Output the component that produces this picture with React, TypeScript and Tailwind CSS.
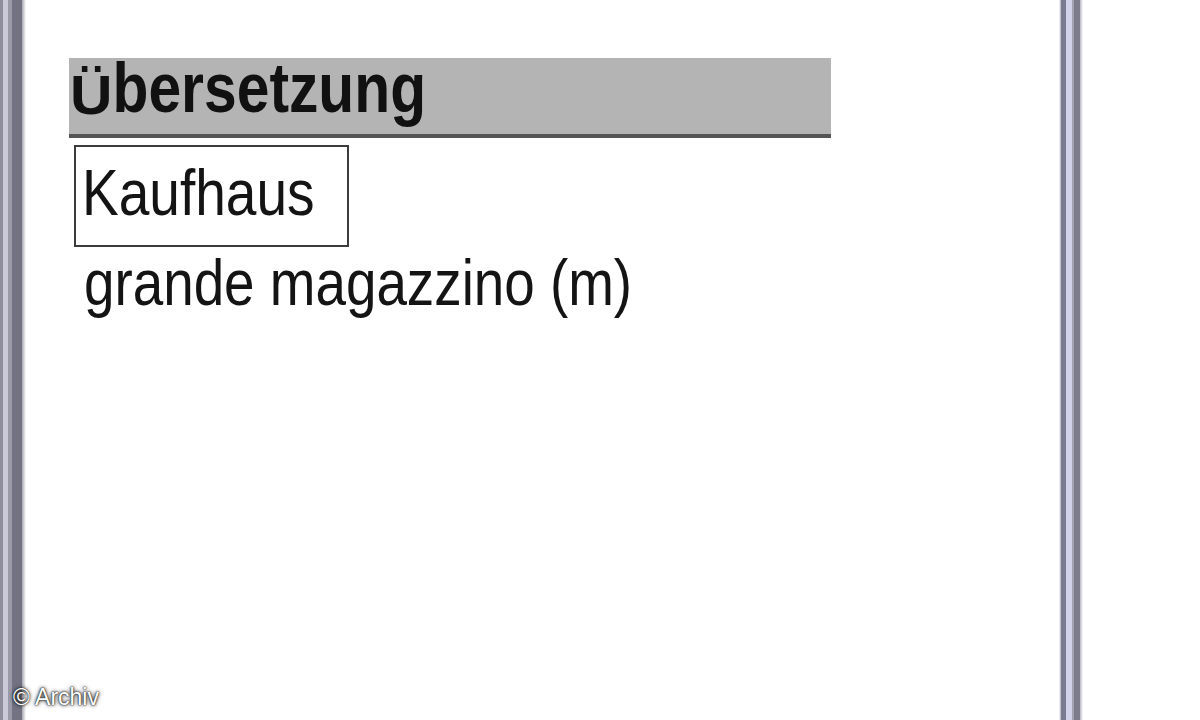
// Dictionary result screen: heading bar, selected source word, translation
const sans = "font-['Liberation_Sans',Arial,sans-serif]";

function LeftFrame() {
  return (
    <div className="flex h-full shrink-0">
      <div className="w-[3px] bg-[#8e8e9c]" />
      <div className="w-[5px] bg-[#cacad8]" />
      <div className="w-[4px] bg-[#9a9aa8]" />
      <div className="w-[10px] bg-[#727282]" />
      <div className="w-[4px] bg-gradient-to-r from-[#a8a8b4] to-white" />
    </div>
  );
}

function RightFrame() {
  return (
    <div className="flex h-full shrink-0">
      <div className="w-[2px] bg-gradient-to-r from-white to-[#b0b0c0]" />
      <div className="w-[5px] bg-[#7a7a90]" />
      <div className="w-[6px] bg-[#d2d2ea]" />
      <div className="w-[2px] bg-[#a2a2b2]" />
      <div className="w-[6px] bg-[#7c7c8a]" />
      <div className="w-[3px] bg-gradient-to-r from-[#b8b8c4] to-white" />
    </div>
  );
}

export default function App() {
  return (
    <div className={`relative flex h-[720px] w-[1200px] overflow-hidden bg-white ${sans}`}>
      <LeftFrame />

      <main className="flex h-full w-[1033px] shrink-0 flex-col bg-white pl-[43px] pt-[58px]">
        <div className="h-[80px] w-[762px] border-b-[4px] border-[#555555] bg-[#b4b4b4]">
          <span className="ml-[1px] mt-[-5px] inline-block origin-left scale-x-[0.84] text-[70px] font-bold leading-none text-[#111111]">
            <span className="inline-block origin-bottom scale-y-[0.8]">Ü</span>
            bersetzung
          </span>
        </div>

        <div className="mt-[7px] ml-[5px] h-[102px] w-[275px] border-2 border-[#3c3c3c] pl-[6px] pt-[14px]">
          <span className="inline-block origin-left scale-x-[0.86] text-[64px] leading-none text-[#141414]">
            Kaufhaus
          </span>
        </div>

        <div className="mt-[4px] ml-[15px]">
          <span className="inline-block origin-left scale-x-[0.856] whitespace-nowrap text-[64px] leading-none text-[#141414]">
            grande magazzino (m)
          </span>
        </div>
      </main>

      <RightFrame />
      <div className="flex-1 bg-white" />

      <span className="absolute left-[13px] top-[686px] text-[23px] leading-none text-white [text-shadow:0_0_4px_#000,0_0_2px_#222,0_0_1px_#444]">
        © Archiv
      </span>
    </div>
  );
}
